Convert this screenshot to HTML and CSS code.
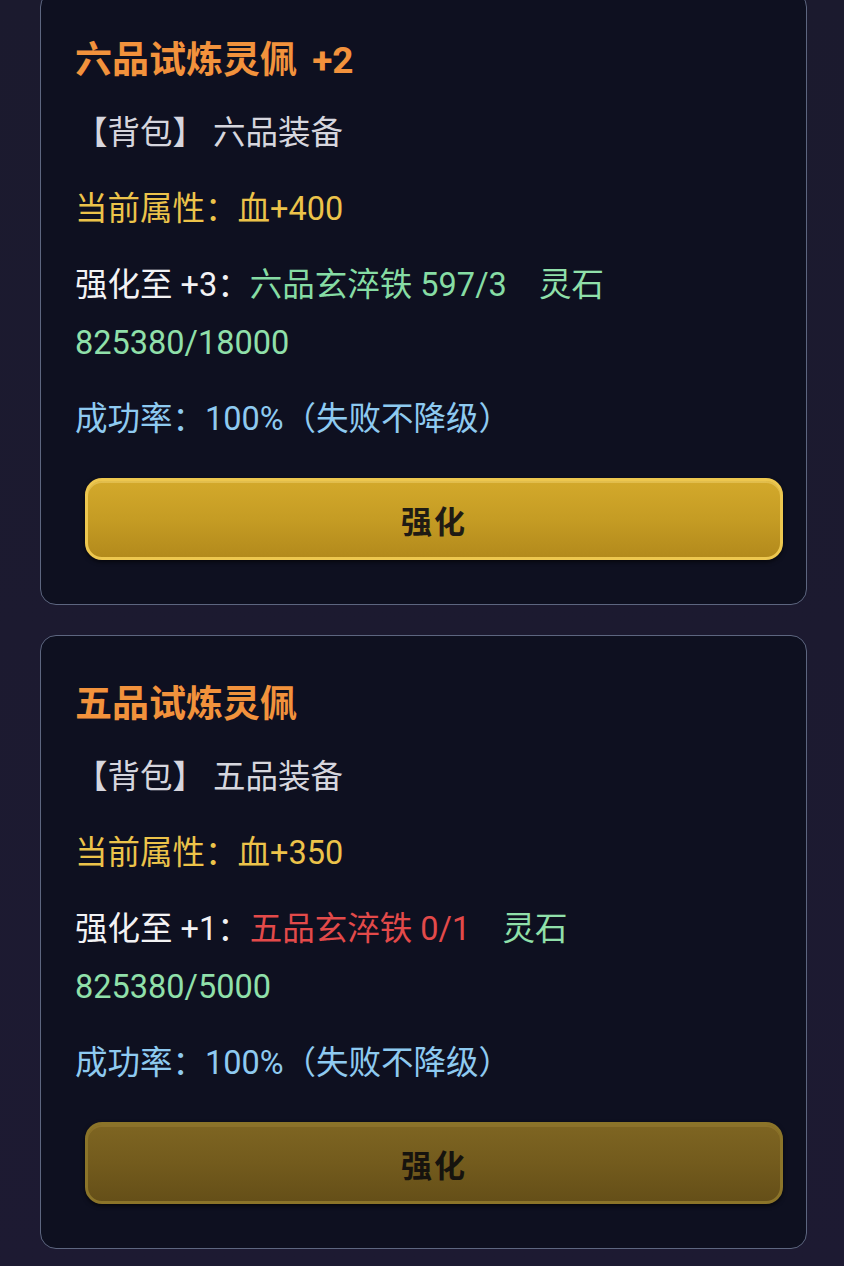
FILE: index.html
```html
<!DOCTYPE html>
<html lang="zh-CN">
<head>
<meta charset="utf-8">
<title>强化</title>
<link rel="stylesheet" href="styles.css">
</head>
<body>
<div class="list">
  <div class="card first">
    <div class="title">六品试炼灵佩 +2</div>
    <div class="line src">【背包】 六品装备</div>
    <div class="line attr">当前属性：血+400</div>
    <div class="line cost"><span class="lbl">强化至 +3：</span><span class="ok">六品玄淬铁 597/3</span>&nbsp;&nbsp;&nbsp;&nbsp;<span class="stone">灵石 825380/18000</span></div>
    <div class="line rate">成功率：100%（失败不降级）</div>
    <button class="btn">强化</button>
  </div>
  <div class="card">
    <div class="title">五品试炼灵佩</div>
    <div class="line src">【背包】 五品装备</div>
    <div class="line attr">当前属性：血+350</div>
    <div class="line cost"><span class="lbl">强化至 +1：</span><span class="bad">五品玄淬铁 0/1</span>&nbsp;&nbsp;&nbsp;&nbsp;<span class="stone">灵石 825380/5000</span></div>
    <div class="line rate">成功率：100%（失败不降级）</div>
    <button class="btn dim">强化</button>
  </div>
</div>
</body>
</html>
```
FILE: styles.css
```css
html, body {
  margin: 0;
  padding: 0;
}
body {
  width: 844px;
  height: 1266px;
  overflow: hidden;
  background: linear-gradient(180deg, #1b1a2e 0%, #1d1a32 100%);
  font-family: Roboto, "Noto Sans CJK SC", sans-serif;
}
.list {
  display: flex;
  flex-direction: column;
  gap: 30px;
  padding: 0 37px 0 40px;
}
.card {
  border: 1px solid #5d6680;
  border-radius: 16px;
  background: #0e1020;
  padding: 44px 60px 44px 34px;
  display: flex;
  flex-direction: column;
}
.card.first {
  margin-top: -9px;
}
.title {
  font-family: Roboto, "Noto Sans CJK SC", sans-serif;
  font-size: 37px;
  font-weight: 700;
  line-height: 50px;
  color: #f2923c;
  margin-bottom: 18px;
  word-spacing: 6px;
}
.line {
  font-size: 32.5px;
  line-height: 58px;
  margin-bottom: 18px;
}
.line.rate {
  margin-bottom: 30px;
}
.src { color: #d6d6de; }
.attr { color: #ecc34a; }
.lbl { color: #f2f2f4; }
.ok { color: #86dca4; }
.bad { color: #e34a4a; }
.stone { color: #90e0aa; }
.rate { color: #8ecaf0; }
.btn {
  margin: 0 -37px 0 10px;
  height: 82px;
  border: 3px solid #edc74f;
  border-radius: 17px;
  background: linear-gradient(180deg, #d3a92b 0%, #c59c24 50%, #b38a1c 100%);
  box-shadow: inset 0 2px 0 rgba(255,230,140,0.35), 0 2px 4px rgba(0,0,0,0.6);
  font-family: "Noto Sans CJK SC", sans-serif;
  font-size: 31px;
  font-weight: 700;
  color: #1f1b14;
  letter-spacing: 2px;
  padding: 0;
}
.btn.dim {
  border-color: #8b7429;
  background: linear-gradient(180deg, #7e6522 0%, #735b1d 50%, #654f18 100%);
  box-shadow: inset 0 2px 0 rgba(200,170,80,0.2), 0 2px 4px rgba(0,0,0,0.6);
  color: #16130e;
}
```
